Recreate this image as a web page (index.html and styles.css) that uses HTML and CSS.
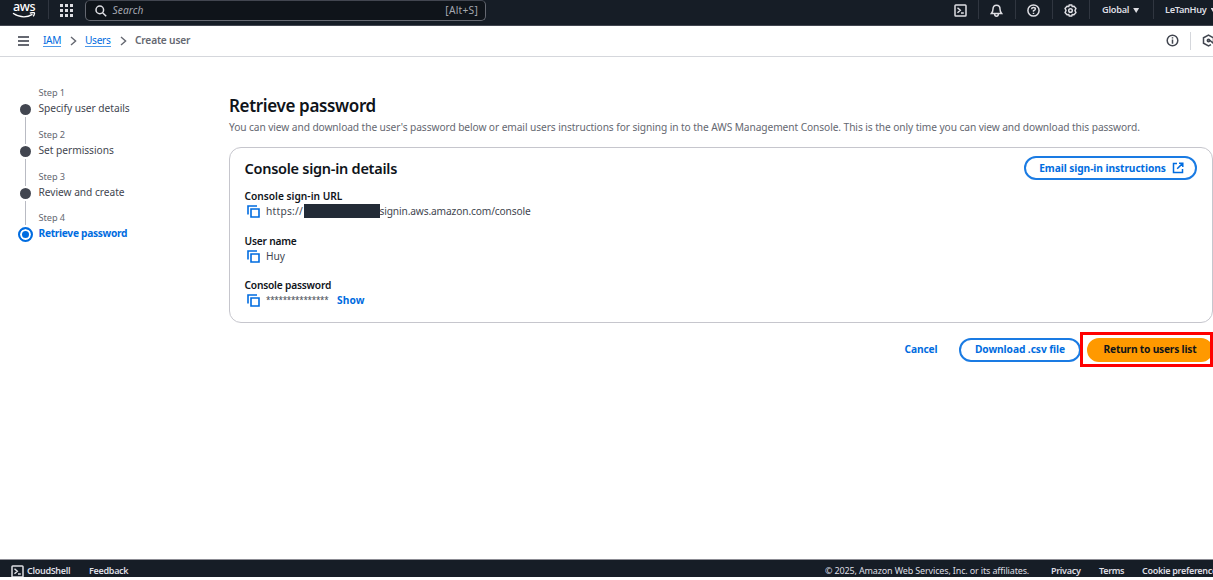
FILE: index.html
```html
<!DOCTYPE html>
<html lang="en">
<head>
<meta charset="utf-8">
<title>Create user | IAM</title>
<link rel="stylesheet" href="styles.css">
</head>
<body>
<svg class="defs" aria-hidden="true">
  <symbol id="copy" viewBox="0 0 13 13"><path d="M1 9.5V1H10M4 4H12V12H4Z" fill="none" stroke="currentColor" stroke-width="1.6"/></symbol>
  <symbol id="shell" viewBox="0 0 13 13"><path d="M1.8 1H11.2Q12 1 12 1.8V11.2Q12 12 11.2 12H1.8Q1 12 1 11.2V1.8Q1 1 1.8 1ZM3.5 3.8L6.3 6.3L3.5 8.8M7 9H9.8" fill="none" stroke="currentColor" stroke-width="1.5"/></symbol>
  <symbol id="chevron" viewBox="0 0 7 10"><path d="M1 1L5.6 5L1 9" fill="none" stroke="currentColor" stroke-width="1.4"/></symbol>
</svg>
<header class="topnav">
  <div class="brand">
    <span class="brand-name">aws</span>
    <svg class="smile" viewBox="0 0 24 7"><path d="M1 1.2Q11 7.8 20.5 2.4M17.8 1Q22.8 -.1 22.5 1.3Q22.3 2.8 21.2 4.4" fill="none" stroke="currentColor" stroke-width="1.3"/></svg>
  </div>
  <svg class="apps" viewBox="0 0 13 13" fill="currentColor"><path d="M0 0h3v3H0zM5 0h3v3H5zM10 0h3v3h-3zM0 5h3v3H0zM5 5h3v3H5zM10 5h3v3h-3zM0 10h3v3H0zM5 10h3v3H5zM10 10h3v3h-3z"/></svg>
  <div class="search">
    <svg class="glass" viewBox="0 0 12 12"><path d="M8.6 4.9A3.8 3.8 0 1 1 1 4.9A3.8 3.8 0 1 1 8.6 4.9ZM7.6 7.7L11.2 11.3" fill="none" stroke="currentColor" stroke-width="1.5"/></svg>
    <span class="hint">Search</span>
    <span class="keys">[Alt+S]</span>
  </div>
  <nav class="tools">
    <span class="tool tool-shell"><svg class="i13"><use href="#shell"/></svg></span>
    <span class="tool"><svg class="i13" viewBox="0 0 13 13" fill="none" stroke="currentColor" stroke-width="1.5"><path d="M1.4 9.5Q3 7.5 3 5Q3 1.2 6.5 1.2Q10 1.2 10 5Q10 7.5 11.6 9.5ZM4.6 10Q4.7 12.2 6.5 12.2Q8.3 12.2 8.4 10"/></svg></span>
    <span class="tool"><svg class="i13" viewBox="0 0 13 13" fill="none" stroke="currentColor" stroke-width="1.5"><circle cx="6.5" cy="6.5" r="5.6"/><path d="M4.6 5.2Q4.7 3.5 6.5 3.5Q8.4 3.5 8.4 5Q8.4 6 6.5 6.8V7.8M6.5 8.7V10"/></svg></span>
    <span class="tool"><svg class="i13" viewBox="0 0 13 13" fill="none" stroke="currentColor" stroke-width="1.5"><path d="M5.3 .9H7.7L8.2 2.5L10 2.2L11.9 4.3L11 6.5L11.9 8.7L10 10.8L8.2 10.5L7.7 12.1H5.3L4.8 10.5L3 10.8L1.1 8.7L2 6.5L1.1 4.3L3 2.2L4.8 2.5Z"/><circle cx="6.5" cy="6.5" r="1.8"/></svg></span>
    <span class="tool region">Global<i class="caret"></i></span>
    <span class="tool account">LeTanHuy<i class="caret"></i></span>
  </nav>
</header>
<div class="crumbs">
  <i class="burger"></i>
  <a class="crumb iam">IAM</a>
  <svg class="chev"><use href="#chevron"/></svg>
  <a class="crumb users">Users</a>
  <svg class="chev"><use href="#chevron"/></svg>
  <span class="current">Create user</span>
  <svg class="info i13" viewBox="0 0 13 13" fill="none" stroke="currentColor" stroke-width="1.5"><circle cx="6.5" cy="6.5" r="5.3"/><path d="M6.5 3.2V4.5M6.5 5.6V9.7"/></svg>
  <i class="bar"></i>
  <svg class="hex i13" viewBox="0 0 13 13" fill="none" stroke="currentColor" stroke-width="1.5"><path d="M11.5 8V3.8L6.5 1L1.5 3.8V9.2L6.5 12L9 10.6M6.5 6.5H8L11.5 9.5"/><circle cx="6.5" cy="6.5" r="1.2"/></svg>
</div>
<main class="page">
  <ol class="steps">
    <li class="step"><i class="dot"></i><small>Step 1</small><span class="name">Specify user details</span></li>
    <li class="step"><i class="dot"></i><small>Step 2</small><span class="name">Set permissions</span></li>
    <li class="step"><i class="dot"></i><small>Step 3</small><span class="name">Review and create</span></li>
    <li class="step active"><i class="dot"></i><small>Step 4</small><span class="name">Retrieve password</span></li>
  </ol>
  <section class="content">
    <h1>Retrieve password</h1>
    <p class="lead">You can view and download the user's password below or email users instructions for signing in to the AWS Management Console. This is the only time you can view and download this password.</p>
    <div class="card">
      <div class="card-head">
        <h2>Console sign-in details</h2>
        <button class="btn email">Email sign-in instructions<svg class="ext" viewBox="0 0 12 12" fill="none" stroke="currentColor" stroke-width="1.5"><path d="M5 1.5H1.5V10.5H10.5V7M7 1.2H10.8V5M10.6 1.4L5.2 6.8"/></svg></button>
      </div>
      <div class="field"><b>Console sign-in URL</b>
        <div class="value"><svg class="i13 copy"><use href="#copy"/></svg><span class="scheme">https://</span><i class="redact"></i><span class="host">signin.aws.amazon.com/console</span></div></div>
      <div class="field"><b class="tight">User name</b>
        <div class="value"><svg class="i13 copy"><use href="#copy"/></svg>Huy</div></div>
      <div class="field"><b class="tight">Console password</b>
        <div class="value"><svg class="i13 copy"><use href="#copy"/></svg><span class="stars">***************</span><a class="show">Show</a></div></div>
    </div>
    <div class="actions">
      <a class="cancel">Cancel</a>
      <button class="btn csv">Download .csv file</button>
      <div class="highlight"><button class="btn primary">Return to users list</button></div>
    </div>
  </section>
</main>
<footer class="footer">
  <svg class="i13"><use href="#shell"/></svg>
  <span class="f-shell">CloudShell</span>
  <span class="f-feed">Feedback</span>
  <span class="f-copy">© 2025, Amazon Web Services, Inc. or its affiliates.</span>
  <span class="f-priv">Privacy</span>
  <span class="f-terms">Terms</span>
  <span class="f-cook">Cookie preferences</span>
</footer>
</body>
</html>
```
FILE: styles.css
```css
* { box-sizing: border-box; }
body { margin: 0; height: 580px; overflow: hidden; background: #fff; color: #424650; font: 10.2px/15px "Noto Sans", "Open Sans", sans-serif; white-space: nowrap; }
h1, h2, p, ol { margin: 0; padding: 0; }
svg, i { display: block; flex: none; }
b, h1, h2 { font-weight: 600; }
.defs { position: absolute; width: 0; height: 0; }
.i13 { width: 13px; height: 13px; }

.topnav { display: flex; height: 26px; background: #161d26; border-bottom: 1px solid #424650; color: #dedee3; }
.brand { width: 49px; height: 19px; padding-left: 12px; border-right: 1px solid #303640; color: #fff; }
.brand-name { display: block; height: 12px; padding-left: 1px; font-size: 12.5px; line-height: 14px; font-weight: 500; letter-spacing: -0.4px; }
.smile { width: 24px; height: 7px; }
.apps { width: 13px; height: 13px; margin: 4px 12px 0 11px; }
.search { display: flex; width: 401px; height: 21px; padding: 0 7px 0 9px; border: 1px solid #656871; border-top-color: #424650; border-radius: 5px; background: #0f141a; line-height: 18px; }
.glass { width: 12px; height: 12px; margin: 4px 5.5px 0 0; }
.hint { color: #a4a7b0; font-style: italic; letter-spacing: 0.1px; }
.keys { margin-left: auto; color: #a4a7b0; letter-spacing: 0.25px; }
.tools { display: flex; margin-left: auto; height: 19px; font-size: 9.2px; font-weight: 600; }
.tool { display: flex; flex: none; width: 37px; padding: 4px 0 0 11px; height: 19px; border-right: 1px solid #303640; line-height: 12px; }
.tool-shell { width: 36px; }
.region { width: 64px; padding-left: 12px; letter-spacing: -0.25px; }
.account { width: 59px; padding-left: 11px; border: 0; letter-spacing: -0.3px; overflow: hidden; }
.caret { width: 6px; height: 5px; margin: 4px 0 0 4px; background: currentColor; clip-path: polygon(0 0, 100% 0, 50% 100%); }

.crumbs { display: flex; align-items: center; height: 31px; padding: 0 0 1px 18px; border-bottom: 1px solid #d5d7dc; color: #656871; overflow: hidden; }
.burger { width: 11px; height: 10px; margin-right: 14px; border-top: 2px solid; border-bottom: 2px solid; background: linear-gradient(currentColor, currentColor) 0 50% / 100% 2px no-repeat; }
.crumb { color: #006ce0; border-bottom: 1px solid #4c98e9; line-height: 12px; letter-spacing: -0.35px; }
.iam { width: 18px; }
.users { width: 26px; }
.chev { width: 7px; height: 10px; margin: 0 8px 0 9px; }
.current { font-weight: 600; letter-spacing: -0.18px; }
.info { margin-left: auto; color: #424650; }
.bar { width: 1px; height: 18px; margin: 0 10.5px 0 11px; background: #d5d7dc; }
.hex { margin-right: -1.5px; color: #424650; }

.page { display: flex; height: 502px; }
.steps { width: 229px; padding: 28.4px 0 0 18.5px; list-style: none; }
.step { display: grid; grid-template-columns: 13px 1fr; column-gap: 7px; grid-template-rows: 15px 26.6px; height: 41.6px; background: linear-gradient(#b9bbc3, #b9bbc3) 6px 0 / 1px 17px no-repeat, linear-gradient(#b9bbc3, #b9bbc3) 6px 32px / 1px 10px no-repeat; }
.step:first-child { background: linear-gradient(#b9bbc3, #b9bbc3) 6px 32px / 1px 10px no-repeat; }
.step:last-child { background: linear-gradient(#b9bbc3, #b9bbc3) 6px 0 / 1px 15px no-repeat; }
.step small { grid-column: 2; grid-row: 1; font-size: 9.2px; line-height: 16px; color: #656871; letter-spacing: -0.05px; }
.step .name { grid-column: 2; grid-row: 2; line-height: 17px; letter-spacing: -0.03px; }
.dot { grid-column: 1; grid-row: 2; width: 11px; height: 11px; margin: 4px 0 0 1px; border-radius: 50%; background: #424650; }
.active { color: #006ce0; }
.step.active .name { font-weight: 700; letter-spacing: -0.3px; }
.active .dot { width: 15px; height: 15px; margin: 2px 0 0 -1px; border: 2px solid #006ce0; background: #006ce0; box-shadow: inset 0 0 0 2px #fff; }

.content { width: 984px; padding-top: 37px; }
h1 { height: 25px; font-size: 17px; line-height: 24px; color: #0f141a; letter-spacing: -0.35px; }
.lead { height: 28px; line-height: 16px; color: #656871; letter-spacing: -0.085px; }
.card { height: 176px; padding: 8px 15px 0 14.5px; border: 1px solid #c6c6cd; border-radius: 12px; }
.card-head { display: flex; justify-content: space-between; height: 33px; }
h2 { font-size: 14.5px; line-height: 24px; color: #0f141a; letter-spacing: -0.26px; }
.btn { display: flex; align-items: center; justify-content: center; height: 24px; padding: 0; border: 2px solid #1a7be3; border-radius: 12px; background: #fff; color: #006ce0; font: 700 10.2px/15px "Noto Sans", sans-serif; letter-spacing: -0.07px; }
.email { width: 173px; padding-left: 2px; gap: 6px; }
.ext { width: 12px; height: 12px; }
.field { height: 44.5px; color: #424650; }
.field b { display: block; height: 15px; color: #0f141a; }
.field .tight { letter-spacing: -0.2px; }
.value { display: flex; height: 15px; }
.copy { margin: 1px 6px 0 2.5px; color: #006ce0; }
.scheme { width: 37.5px; letter-spacing: 0.25px; }
.host { letter-spacing: -0.14px; }
.redact { width: 76px; height: 14px; background: #232b37; }
.stars { width: 62px; font-size: 8px; letter-spacing: -0.25px; line-height: 14px; }
.show { margin-left: 9px; color: #006ce0; font-weight: 700; letter-spacing: 0.1px; }
.actions { display: flex; height: 35px; margin-top: 9px; }
.cancel { width: 54.5px; margin-left: 675.5px; color: #006ce0; font-weight: 700; line-height: 35px; letter-spacing: -0.1px; }
.csv { width: 122px; margin-top: 6px; padding-bottom: 1px; }
.highlight { width: 133px; height: 35px; padding: 3px 0 0 4px; border: 3px solid #f00; margin-left: -1px; overflow: hidden; }
.primary { width: 126px; padding-bottom: 1px; border-color: #ff9900; background: #ff9900; color: #0f141a; letter-spacing: -0.2px; }

.footer { display: flex; height: 18px; padding: 4px 0 0 11px; border-top: 1px solid #8c8c94; background: #161d26; color: #dedee3; font-size: 9px; font-weight: 600; line-height: 14px; letter-spacing: -0.3px; overflow: hidden; }
.footer .i13 { margin-top: 1px; }
.footer span { flex: none; }
.f-shell { width: 62px; margin-left: 3px; }
.f-feed { width: 736px; }
.footer .f-copy { width: 226px; font-weight: 400; letter-spacing: -0.15px; }
.f-priv { width: 48px; }
.f-terms { width: 43px; }
```
